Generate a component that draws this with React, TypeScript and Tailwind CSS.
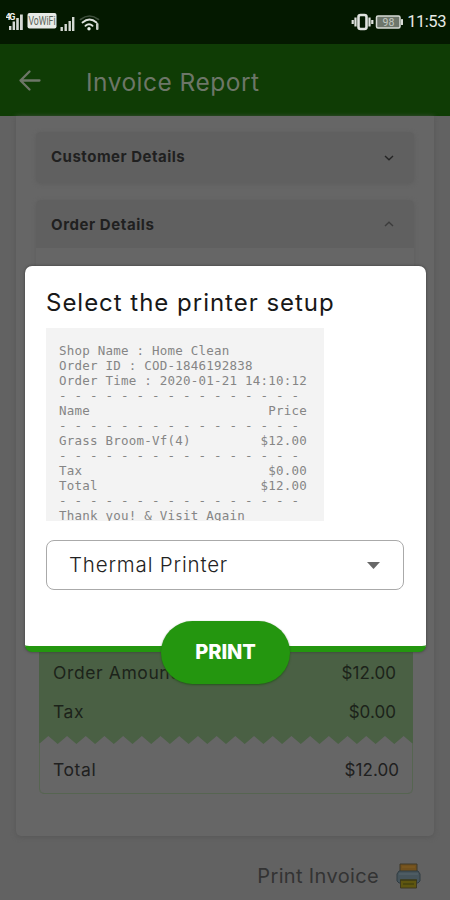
import type { ReactNode } from "react";

function StatusBar() {
  return (
    <div className="flex h-11 shrink-0 items-center justify-between bg-[#041900] pl-[6px] pr-[4px] text-[#e8ebe7]">
      <svg width="96" height="22" viewBox="0 0 96 22" className="mt-0.5">
        <g fill="#d5d9d4">
          <rect x="3" y="14" width="2.4" height="4" />
          <rect x="6.6" y="9.5" width="2.4" height="8.5" />
          <rect x="10.2" y="6" width="2.6" height="12" />
          <rect x="14" y="2.5" width="2.8" height="15.5" />
          <rect x="54.5" y="15" width="2.4" height="4" />
          <rect x="58.500" y="12" width="2.4" height="7" />
          <rect x="62.500" y="9" width="2.4" height="10" />
          <rect x="66" y="5" width="2.400" height="14" />
          <rect x="21.500" y="1" width="29" height="15.500" rx="2" fill="#e8ebe7" />
        </g>
        <text x="-0.5" y="7.500" fontSize="9" fontWeight="700" fill="#f3f3f3" fontFamily="Roboto, sans-serif" textLength="10">4G</text>
        <text x="22.500" y="13" fontSize="12" fill="#5c655a" fontFamily="Roboto, sans-serif" textLength="27" lengthAdjust="spacingAndGlyphs">VoWiFi</text>
        <g fill="none" stroke="#dfe2de" strokeWidth="1.900" strokeLinecap="round">
          <path d="M74.500 7.500Q83.500 .5 92.500 7.500" stroke="#3f4f3c" strokeWidth="1.600" />
          <path d="M76.500 10.500Q83.500 4.500 90.500 10.500" />
          <path d="M79.500 13.800Q83 10.800 86.500 13.800" />
        </g>
        <circle cx="83" cy="16.800" r="1.700" fill="#e8ebe7" />
        <rect x="90" y="11" width="2.500" height="7" rx="1" fill="#c5cac3" />
      </svg>
      <div className="flex items-center">
        <svg width="54" height="20" viewBox="0 0 54 20" className="mr-[3px]">
          <rect x="8.500" y="3" width="8" height="14" rx="2" fill="none" stroke="#dfe2de" strokeWidth="2.600" />
          <path d="M5.500 5.500v9M19.500 5.500v9M2.700 8v4M22.300 8v4" stroke="#dfe2de" strokeWidth="2.200" />
          <rect x="26.500" y="4" width="23.500" height="12" rx="1.500" fill="#6d766b" stroke="#d8dcd6" strokeWidth="1.500" />
          <rect x="51" y="7" width="2" height="6" rx=".5" fill="#d8dcd6" />
          <text x="32.500" y="14" fontSize="10.500" fill="#c3c9c1" fontFamily="Roboto, sans-serif">98</text>
        </svg>
        <span className="font-['Roboto',sans-serif] text-[16.500px] leading-5 tracking-[-0.45px]">11:53</span>
      </div>
    </div>
  );
}

function Header() {
  return (
    <header className="flex h-[72px] shrink-0 items-center bg-[#0f3c05] pl-[18px] text-[#6d7668]">
      <svg width="23" height="24" viewBox="0 0 23 24" fill="none" stroke="currentColor" strokeWidth="2.300" strokeLinecap="round" strokeLinejoin="round">
        <path d="M21.500 12.500H2.500M11.500 3.500L2.500 12.500L11.500 21.500" />
      </svg>
      <h1 className="ml-[45px] mt-[4px] text-[24.500px] font-normal leading-8 tracking-[0.480px]">Invoice Report</h1>
    </header>
  );
}

function Chevron({ up = false }: { up?: boolean }) {
  return (
    <svg width="10" height="6" viewBox="0 0 10 6" fill="none" stroke={up ? "#3c3c3c" : "#252525"} strokeWidth="1.400">
      <path d={up ? "M1 5L5 1.300L9 5" : "M1 1L5 4.700L9 1"} />
    </svg>
  );
}

function AmountRow({ label, children, className }: { label: string; children: ReactNode; className: string }) {
  return (
    <div className={`flex items-center justify-between leading-6 ${className}`}>
      <span className="text-[17.500px] tracking-[0.600px]">{label}</span>
      <span className="text-[17px] tracking-[0.050px]">{children}</span>
    </div>
  );
}

const teeth = Array.from({ length: 20 }, (_, i) => `L${i * 18.7 + 9.35} 0L${(i + 1) * 18.7} 8`).join("");

const rule = "- - - - - - - - - - - - - - - -";
const receipt = [
  "Shop Name : Home Clean",
  "Order ID : COD-1846192838",
  "Order Time : 2020-01-21 14:10:12",
  rule,
  "Name" + "Price".padStart(28),
  rule,
  "Grass Broom-Vf(4)" + "$12.00".padStart(15),
  rule,
  "Tax" + "$0.00".padStart(29),
  "Total" + "$12.00".padStart(27),
  rule,
  "Thank you! & Visit Again",
].join("\n");

function Invoice() {
  return (
    <main className="flex flex-1 flex-col bg-[#626262] px-4 text-[#202020]">
      <section className="flex h-[720px] flex-col rounded-b-[5px] bg-[#666] px-5 pt-4 shadow-[0_1px_5px_#575757]">
        <div className="flex h-[51px] shrink-0 items-center justify-between rounded-[5px] bg-[#606060] pl-[15px] pr-5 shadow-[0_1px_4px_#5e5e5e]">
          <h2 className="-mt-[2px] text-[15px] font-bold leading-5 tracking-[0.500px]">Customer Details</h2>
          <Chevron />
        </div>
        <div className="mt-[17px] h-[430px] shrink-0 rounded-[5px] shadow-[0_1px_4px_#5e5e5e]">
          <div className="flex h-12 items-center justify-between rounded-t-[5px] bg-[#606060] pl-[15px] pr-5">
            <h2 className="mt-[2px] text-[15px] font-bold leading-5 tracking-[0.580px]">Order Details</h2>
            <Chevron up />
          </div>
        </div>
        <div className="ml-[3px] flex h-[164px] w-[374px] shrink-0 flex-col rounded-b-[5px] border-b border-[#566551] bg-[#666]">
          <div className="h-[106px] bg-[#4a6044] text-[#1c231a]">
            <AmountRow label="Order Amount" className="pl-[14px] pr-[17px] pt-[31px]">$12.00</AmountRow>
            <AmountRow label="Tax" className="pl-[14px] pr-[17px] pt-[15px]">$0.00</AmountRow>
          </div>
          <svg width="374" height="8" viewBox="0 0 374 8" className="shrink-0">
            <path d={`M0 0V8${teeth}V0Z`} fill="#4a6044" />
          </svg>
          <div className="flex-1 rounded-b-[5px] border-x border-[#566551] pt-[14px]">
            <AmountRow label="Total" className="pl-[13px] pr-[13px]">$12.00</AmountRow>
          </div>
        </div>
      </section>
      <footer className="flex h-16 items-end justify-end pb-[10px] pr-[12px] text-[#333]">
        <span className="text-[20px] leading-7 tracking-[0.350px]">Print Invoice</span>
        <svg width="27" height="28" viewBox="0 0 27 28" className="ml-4">
          <path d="M5 2h17v8H5z" fill="#71501d" stroke="#3e3929" />
          <path d="M7 4h13v2H7z" fill="#78561f" />
          <path d="M4 9h19l2 3v7l-2 2H4l-2-2v-7z" fill="#46545b" stroke="#303c43" />
          <path d="M4 12h19" stroke="#56656c" />
          <path d="M5.500 18h16v8h-16z" fill="#5f560f" stroke="#3e3923" />
          <path d="M5 18h17M8 22h11" stroke="#39380f" strokeWidth="1.200" />
        </svg>
      </footer>
    </main>
  );
}

function PrinterDialog() {
  return (
    <div role="dialog" className="absolute left-[25px] top-[266px] flex h-[386px] w-[401px] flex-col rounded-[7px] border-b-[6px] border-[#24960f] bg-white px-[21px] pt-[20px] shadow-[0_0_3px_#3a3a3a]">
      <h2 className="mt-[1px] whitespace-nowrap text-[24px] font-normal leading-8 tracking-[0.980px] text-[#181818]">Select the printer setup</h2>
      <pre className="mt-[9px] h-[193px] w-[278px] shrink-0 overflow-hidden bg-[#f3f3f3] pl-[13px] pt-[14.500px] font-['DejaVu_Sans_Mono',monospace] text-[12.500px] leading-[15px] tracking-[0.225px] text-[#858585]">{receipt}</pre>
      <div className="mt-[19px] flex h-[50px] w-[358px] shrink-0 items-center justify-between rounded-[8px] border border-[#aaa] pl-[22px] pr-[23px] text-[20.500px] font-light tracking-[0.820px] text-[#222]">
        <span>Thermal Printer</span>
        <svg width="13" height="7" viewBox="0 0 13 7"><path d="M0 0H13L6.500 7Z" fill="#686868" /></svg>
      </div>
      <button className="absolute left-[136px] top-[355px] h-[63px] w-[129px] rounded-[32px] bg-[#24960f] pb-[2px] text-[20px] font-extrabold tracking-[-0.100px] text-white shadow-[0_1px_2px_#28551f]">PRINT</button>
    </div>
  );
}

export default function App() {
  return (
    <div className="relative flex h-[900px] w-[450px] flex-col overflow-hidden font-['Inter','Open_Sans',sans-serif]">
      <StatusBar />
      <Header />
      <Invoice />
      <PrinterDialog />
    </div>
  );
}
